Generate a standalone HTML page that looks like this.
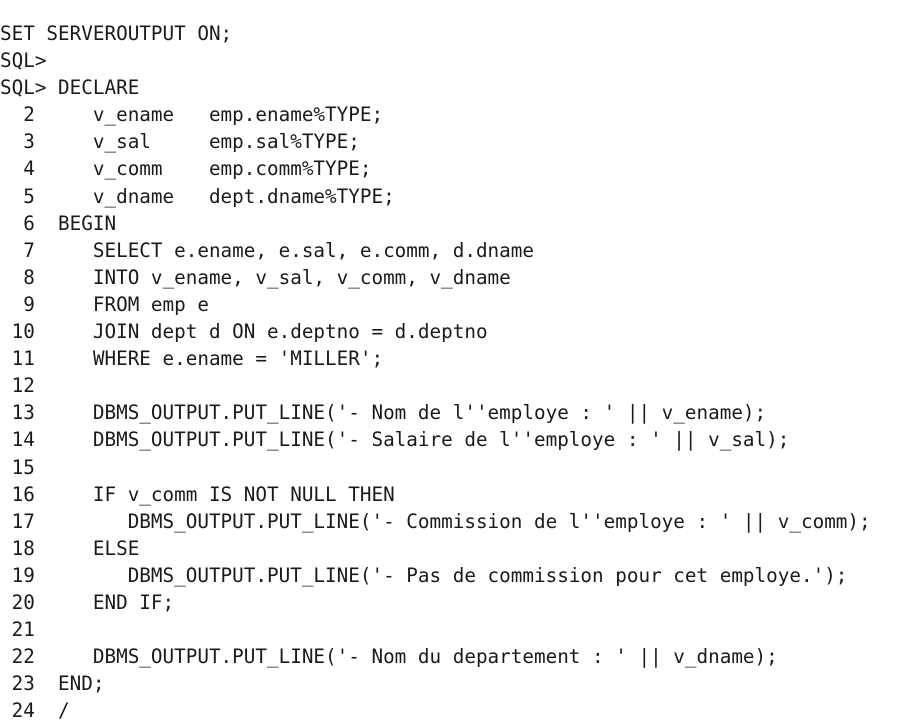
<!DOCTYPE html>
<html><head><meta charset="utf-8"><style>
html,body{margin:0;padding:0;background:#fff;width:915px;height:727px;overflow:hidden}
pre{margin:0;position:absolute;left:0;top:20px;font-family:"DejaVu Sans Mono","Liberation Mono",monospace;font-size:19.3px;line-height:27.1px;color:#1a1a1a}
</style></head><body><pre>SET SERVEROUTPUT ON;
SQL&gt;
SQL&gt; DECLARE
  2     v_ename   emp.ename%TYPE;
  3     v_sal     emp.sal%TYPE;
  4     v_comm    emp.comm%TYPE;
  5     v_dname   dept.dname%TYPE;
  6  BEGIN
  7     SELECT e.ename, e.sal, e.comm, d.dname
  8     INTO v_ename, v_sal, v_comm, v_dname
  9     FROM emp e
 10     JOIN dept d ON e.deptno = d.deptno
 11     WHERE e.ename = 'MILLER';
 12
 13     DBMS_OUTPUT.PUT_LINE('- Nom de l''employe : ' || v_ename);
 14     DBMS_OUTPUT.PUT_LINE('- Salaire de l''employe : ' || v_sal);
 15
 16     IF v_comm IS NOT NULL THEN
 17        DBMS_OUTPUT.PUT_LINE('- Commission de l''employe : ' || v_comm);
 18     ELSE
 19        DBMS_OUTPUT.PUT_LINE('- Pas de commission pour cet employe.');
 20     END IF;
 21
 22     DBMS_OUTPUT.PUT_LINE('- Nom du departement : ' || v_dname);
 23  END;
 24  /</pre></body></html>
